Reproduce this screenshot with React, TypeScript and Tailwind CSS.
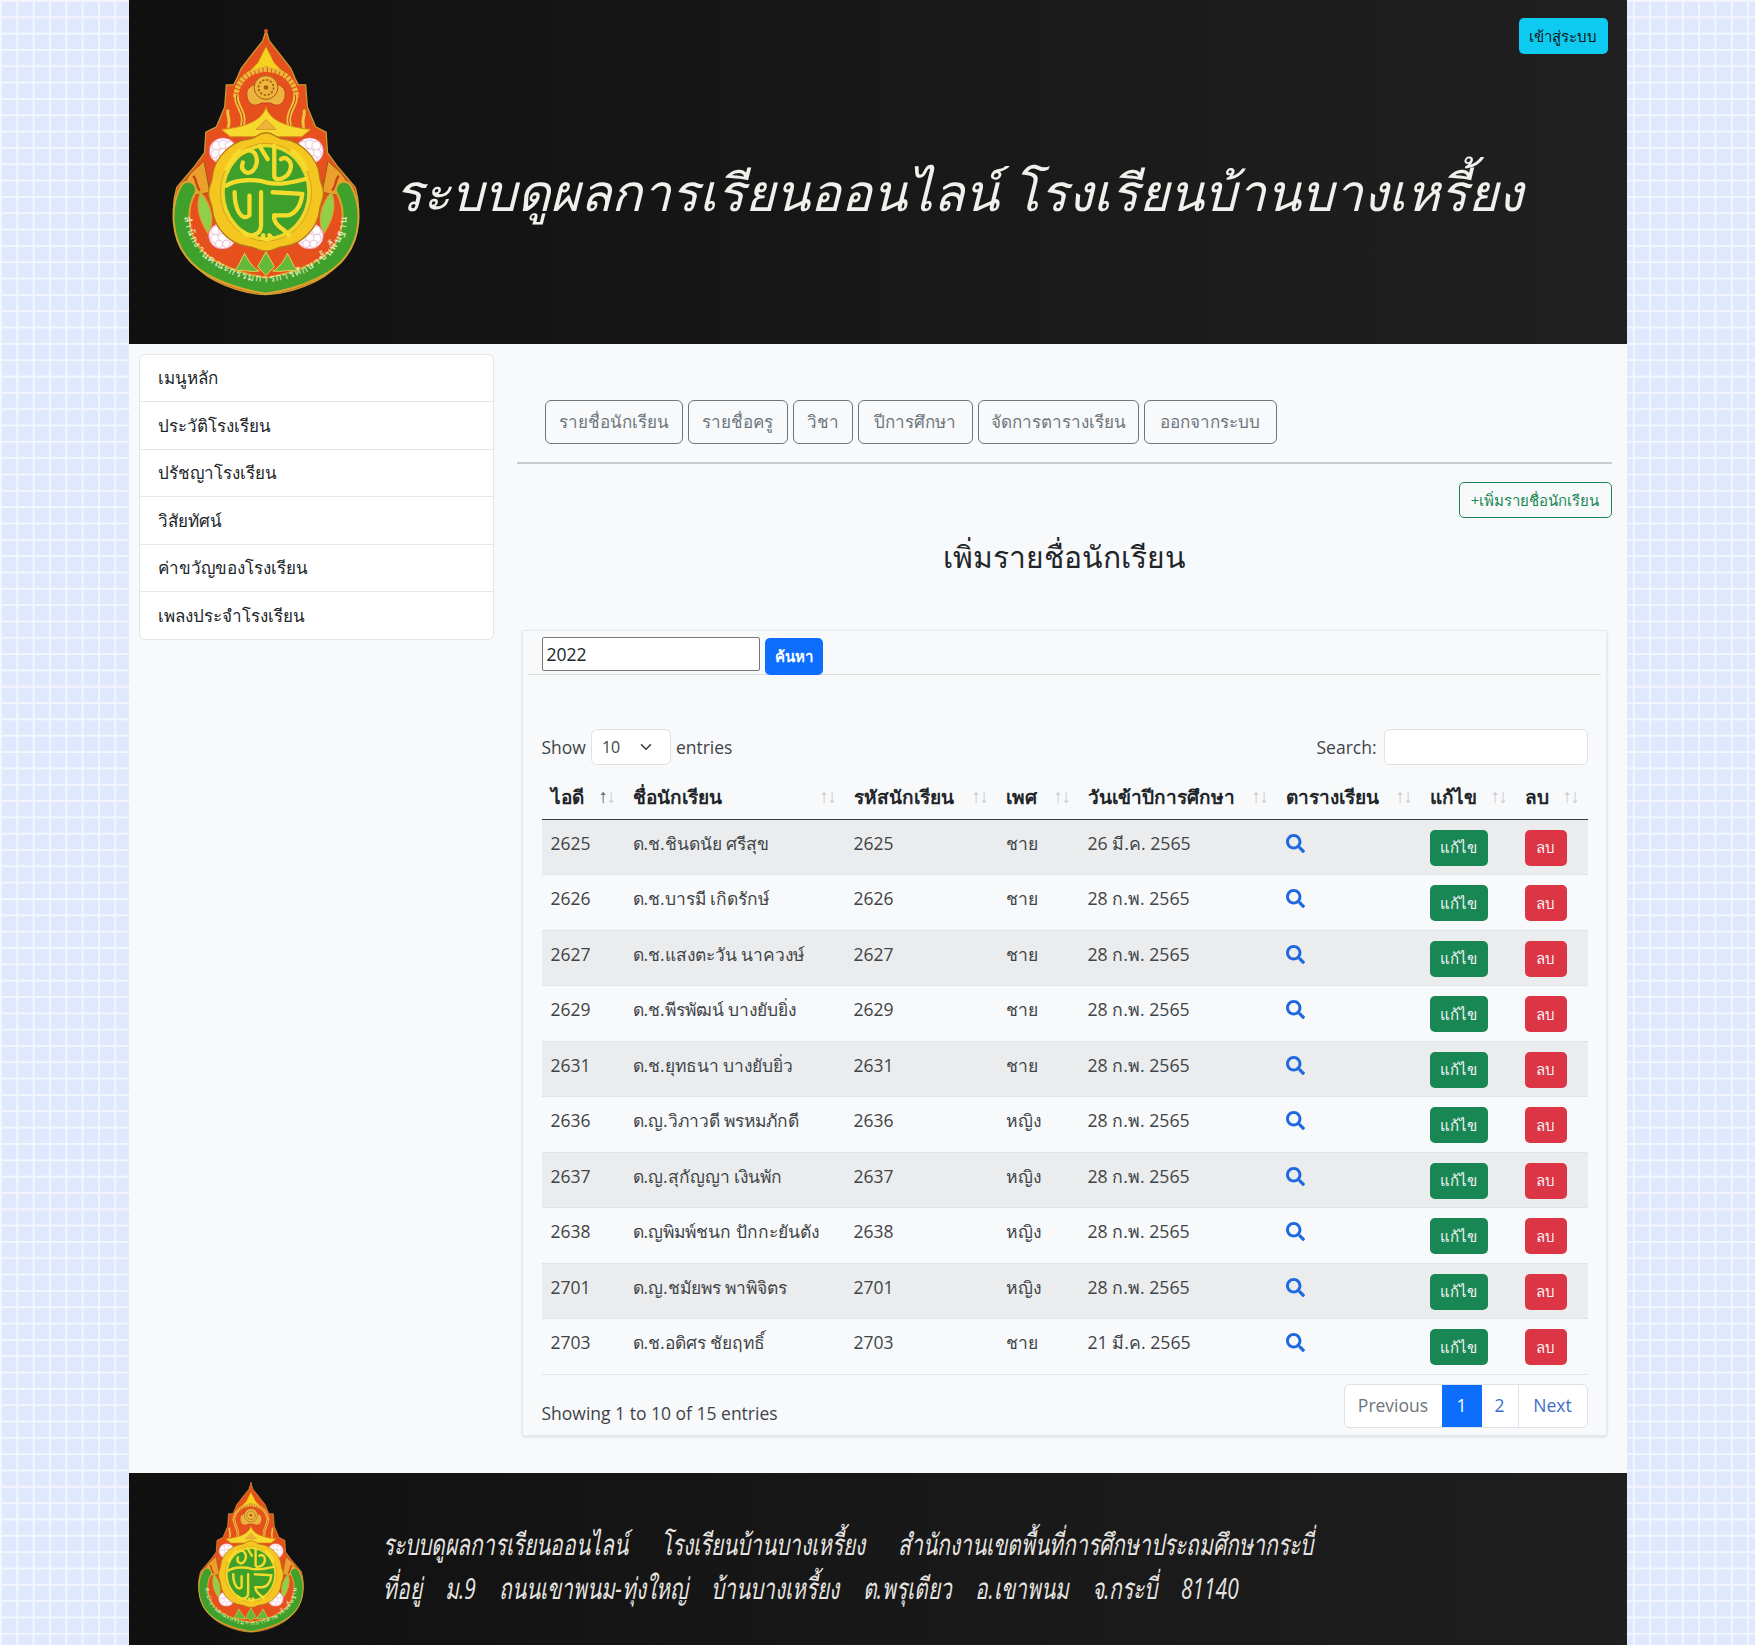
import { FaSearch } from "react-icons/fa";
import { ChevronDown } from "lucide-react";

const menuItems = ["เมนูหลัก", "ประวัติโรงเรียน", "ปรัชญาโรงเรียน", "วิสัยทัศน์", "ค่าขวัญของโรงเรียน", "เพลงประจำโรงเรียน"];

const navButtons = [
  { label: "รายชื่อนักเรียน", width: "w-[138px]" },
  { label: "รายชื่อครู", width: "w-[100px]" },
  { label: "วิชา", width: "w-[60px]" },
  { label: "ปีการศึกษา", width: "w-[115px]" },
  { label: "จัดการตารางเรียน", width: "w-[161px]" },
  { label: "ออกจากระบบ", width: "w-[133px]" },
];

const columns = [
  { label: "ไอดี", width: "w-[82px]" },
  { label: "ชื่อนักเรียน", width: "w-[221px]" },
  { label: "รหัสนักเรียน", width: "w-[152px]" },
  { label: "เพศ", width: "w-[82px]" },
  { label: "วันเข้าปีการศึกษา", width: "w-[198px]" },
  { label: "ตารางเรียน", width: "w-[144px]" },
  { label: "แก้ไข", width: "w-[95px]" },
  { label: "ลบ", width: "w-[72px]" },
];

const students = [
  { id: 2625, name: "ด.ช.ชินดนัย ศรีสุข", sex: "ชาย", date: "26 มี.ค. 2565" },
  { id: 2626, name: "ด.ช.บารมี เกิดรักษ์", sex: "ชาย", date: "28 ก.พ. 2565" },
  { id: 2627, name: "ด.ช.แสงตะวัน นาควงษ์", sex: "ชาย", date: "28 ก.พ. 2565" },
  { id: 2629, name: "ด.ช.พีรพัฒน์ บางยับยิ่ง", sex: "ชาย", date: "28 ก.พ. 2565" },
  { id: 2631, name: "ด.ช.ยุทธนา บางยับยิ่ว", sex: "ชาย", date: "28 ก.พ. 2565" },
  { id: 2636, name: "ด.ญ.วิภาวดี พรหมภักดี", sex: "หญิง", date: "28 ก.พ. 2565" },
  { id: 2637, name: "ด.ญ.สุกัญญา เงินพัก", sex: "หญิง", date: "28 ก.พ. 2565" },
  { id: 2638, name: "ด.ญพิมพ์ชนก ปักกะยันตัง", sex: "หญิง", date: "28 ก.พ. 2565" },
  { id: 2701, name: "ด.ญ.ชมัยพร พาพิจิตร", sex: "หญิง", date: "28 ก.พ. 2565" },
  { id: 2703, name: "ด.ช.อดิศร ชัยฤทธิ์", sex: "ชาย", date: "21 มี.ค. 2565" },
];

function Lotus({ x, y }: { x: number; y: number }) {
  return (
    <g transform={`translate(${x} ${y})`}>
      <ellipse cx="0" cy="0" rx="42" ry="40" fill="#fbf3f6" stroke="#e7577c" strokeWidth="2" />
      <circle cx="-20" cy="-16" r="13" fill="#fff" stroke="#e3a9bd" strokeWidth="2" />
      <circle cx="0" cy="-20" r="13" fill="#fff" stroke="#e3a9bd" strokeWidth="2" />
      <circle cx="20" cy="-16" r="13" fill="#fff" stroke="#e3a9bd" strokeWidth="2" />
      <circle cx="-22" cy="8" r="13" fill="#fff" stroke="#e3a9bd" strokeWidth="2" />
      <circle cx="22" cy="8" r="13" fill="#fff" stroke="#e3a9bd" strokeWidth="2" />
      <circle cx="0" cy="6" r="13" fill="#fff" stroke="#e3a9bd" strokeWidth="2" />
      <circle cx="-10" cy="24" r="11" fill="#fff" stroke="#e3a9bd" strokeWidth="2" />
      <circle cx="12" cy="24" r="11" fill="#fff" stroke="#e3a9bd" strokeWidth="2" />
    </g>
  );
}

// emblem of the education commission, traced by eye from the banner
function Emblem({ className }: { className: string }) {
  const band = "M84 512 C52 570 60 650 98 700 C130 745 210 785 320 803 C430 785 510 745 542 700 C580 650 588 570 556 512";
  return (
    <svg viewBox="36 26 574 808" className={className}>
      <path
        d="M320 30 L330 62 L360 100 L395 145 L410 180 L418 195 L440 195 L445 262 L470 322 L502 338 L506 400 L535 440 L590 505 C610 570 600 640 565 700 C540 745 510 770 470 790 C420 815 370 828 320 830 C270 828 220 815 170 790 C130 770 100 745 75 700 C40 640 30 570 50 505 L105 440 L134 400 L138 338 L170 322 L195 262 L200 195 L222 195 L230 180 L245 145 L280 100 L310 62 Z"
        fill="#e6501c"
        stroke="#c99a2e"
        strokeWidth="4"
      />
      {/* crown */}
      <path d="M320 78 L345 128 L378 162 L350 150 L320 140 L290 150 L262 162 L295 128 Z" fill="#f6d21f" stroke="#b7761a" strokeWidth="2" />
      <path d="M228 232 C232 180 270 150 320 148 C370 150 408 180 412 232" fill="none" stroke="#e9b93a" strokeWidth="16" strokeDasharray="10 3" />
      <path d="M262 225 C255 175 385 175 378 225 C376 258 350 262 335 250 L305 250 C290 262 264 258 262 225 Z" fill="#edb43d" stroke="#c9401a" strokeWidth="3" />
      <circle cx="320" cy="203" r="36" fill="#efb43a" stroke="#a45b15" strokeWidth="3" />
      <circle cx="320" cy="203" r="23" fill="none" stroke="#a45b15" strokeWidth="5" strokeDasharray="7 5" />
      <circle cx="320" cy="203" r="7" fill="#a45b15" />
      <g fill="none">
        <path d="M232 225 C222 255 262 275 248 320 M408 225 C418 255 378 275 392 320" stroke="#f2c33d" strokeWidth="14" />
        <path d="M232 225 C222 255 262 275 248 320 M408 225 C418 255 378 275 392 320" stroke="#b83a16" strokeWidth="3" />
        <path d="M205 270 C200 290 215 300 205 325 M435 270 C440 290 425 300 435 325" stroke="#f2c33d" strokeWidth="9" />
      </g>
      <path d="M320 262 C310 300 265 322 185 330 L212 352 L428 352 L455 330 C375 322 330 300 320 262 Z" fill="#f7d82c" stroke="#d4911d" strokeWidth="3" />
      <path d="M290 330 L320 300 L350 330 Z" fill="#efb43a" stroke="#c9801a" strokeWidth="2" />
      {/* side scrolls */}
      <g fill="#eaa02a" stroke="#9c5a14" strokeWidth="3">
        <path d="M78 485 C92 455 122 440 132 425 L150 520 L100 530 C85 525 72 510 78 485 Z" />
        <path d="M562 485 C548 455 518 440 508 425 L490 520 L540 530 C555 525 568 510 562 485 Z" />
      </g>
      <path d="M100 470 C115 490 105 500 120 515 M540 470 C525 490 535 500 520 515" fill="none" stroke="#c9401a" strokeWidth="7" />
      {/* green band */}
      <path d={band} fill="none" stroke="#d9a52f" strokeWidth="54" strokeLinecap="round" />
      <path d={band} fill="none" stroke="#3fa12b" strokeWidth="42" strokeLinecap="round" />
      <path id="emblem-band-text" d="M72 590 C82 660 110 705 158 738 C215 776 270 790 320 792 C370 790 425 776 482 738 C530 705 558 660 568 590" fill="none" />
      <text fontSize="30" fill="#f7f5d5" fontWeight="500">
        <textPath href="#emblem-band-text" startOffset="50%" textAnchor="middle" textLength="690" lengthAdjust="spacing">
          สำนักงานคณะกรรมการการศึกษาขั้นพื้นฐาน
        </textPath>
      </text>
      {/* leaf ornaments */}
      <path d="M122 520 C104 565 122 610 145 645 C165 610 156 560 122 520 Z M518 520 C536 565 518 610 495 645 C475 610 484 560 518 520 Z" fill="#8fcf4a" stroke="#d9a52f" strokeWidth="4" />
      <path d="M320 700 L345 745 L320 772 L295 745 Z M255 705 C270 735 285 752 300 758 C270 764 245 750 222 760 C238 745 245 722 255 705 Z M385 705 C370 735 355 752 340 758 C370 764 395 750 418 760 C402 745 395 722 385 705 Z" fill="#63b93a" stroke="#e9d44f" strokeWidth="3" />
      <Lotus x={190} y={395} />
      <Lotus x={452} y={395} />
      <Lotus x={188} y={652} />
      <Lotus x={452} y={652} />
      {/* medallion */}
      <path d="M320 340 C345 340 350 358 375 360 C428 366 478 420 482 470 C484 495 494 500 494 522 C494 545 484 552 482 575 C476 630 428 678 375 684 C350 686 345 698 320 698 C295 698 290 686 265 684 C212 678 164 630 158 575 C156 552 146 545 146 522 C146 500 156 495 158 470 C162 420 212 366 265 360 C290 358 295 340 320 340 Z" fill="#f4c61f" stroke="#b7761a" strokeWidth="4" />
      <ellipse cx="320" cy="520" rx="138" ry="148" fill="#f0d52a" stroke="#c28a1c" strokeWidth="2" />
      <ellipse cx="320" cy="520" rx="125" ry="136" fill="#3e9f2a" />
      <g fill="none" strokeLinecap="round" strokeLinejoin="round" stroke="#f5dc2c" strokeWidth="13">
        <path d="M250 400 C290 375 305 430 280 455 C265 470 240 455 250 430" />
        <path d="M345 380 L345 470 C345 490 390 480 395 445 C398 425 380 410 365 420" />
        <path d="M200 500 C230 480 290 480 320 490 C360 500 400 490 440 480" />
        <path d="M225 520 C225 570 245 610 270 590 L270 530" />
        <path d="M305 520 L305 620 C305 650 270 660 250 640" />
        <path d="M340 520 L430 525 C425 565 405 590 380 590 L345 590" />
        <path d="M345 590 C340 620 375 630 390 650" />
        <path d="M200 450 C215 420 225 410 240 395 M440 450 C430 420 415 405 400 395" />
        <path d="M300 380 L325 420 M330 650 C350 665 300 668 312 650" />
      </g>
      <circle cx="320" cy="32" r="6" fill="#e6501c" />
    </svg>
  );
}

function SortArrows({ active }: { active?: boolean }) {
  return (
    <span className="shrink-0 text-[19px] leading-none font-normal tracking-[-1.5px] text-[#c9cbcd]">
      <span className={active ? "text-[#555a5f]" : ""}>↑</span>↓
    </span>
  );
}

export default function App() {
  return (
    <div className="min-h-screen bg-[#dfe8fc] bg-[linear-gradient(#f3f6fe_1.5px,transparent_1.5px),linear-gradient(90deg,#f3f6fe_1.5px,transparent_1.5px)] bg-[size:16.33px_16.33px] font-['Open_Sans','Noto_Sans',sans-serif] text-[17.5px] text-[#212529]">
      <div className="mx-auto w-[1498px] bg-[#f8f9fa]">
        {/* Banner */}
        <header className="relative flex h-[344px] items-start bg-[linear-gradient(90deg,#101010,#212020)]">
          <Emblem className="mt-[29px] ml-[43px] h-[267px] w-[190px] shrink-0" />
          <div className="mt-[155px] ml-[33px] text-[51.4px] leading-[72px] whitespace-nowrap text-[#f2f0ec] italic">
            ระบบดูผลการเรียนออนไลน์ โรงเรียนบ้านบางเหรี้ยง
          </div>
          <button className="absolute top-[18px] right-[19px] h-[36px] w-[89px] rounded-[5px] bg-[#0dcaf0] text-[15px] font-medium text-[#111]">
            เข้าสู่ระบบ
          </button>
        </header>

        <div className="flex">
          {/* Sidebar */}
          <aside className="mt-[10px] ml-[10px] h-[286px] w-[355px] shrink-0 overflow-hidden rounded-[6px] border border-[#e4e5e6] bg-white text-[17px]">
            {menuItems.map((item) => (
              <div key={item} className="flex h-[47.4px] items-center border-b border-[#e6e7e8] px-[18px] last:border-b-0">
                {item}
              </div>
            ))}
          </aside>

          <main className="ml-[23px] w-[1095px]">
            {/* Nav */}
            <nav className="mt-[56px] flex gap-[5px] pl-[28px]">
              {navButtons.map((btn) => (
                <button key={btn.label} className={`h-[44px] rounded-[6px] border border-[#6c757d] text-[17px] text-[#6c757d] ${btn.width}`}>
                  {btn.label}
                </button>
              ))}
            </nav>
            <hr className="mt-[18px] border-t-2 border-[#c9cacb]" />

            <div className="mt-[18px] flex justify-end">
              <button className="h-[36px] w-[153px] rounded-[5px] border border-[#198754] text-[15px] text-[#198754]">
                +เพิ่มรายชื่อนักเรียน
              </button>
            </div>

            <h3 className="mt-[19px] h-[93px] text-center text-[30px] leading-[40px] font-medium">เพิ่มรายชื่อนักเรียน</h3>

            {/* Card */}
            <section className="mb-[37px] ml-[5px] h-[806px] w-[1085px] rounded-[2px] border border-[#e7e8e9] shadow-[0_1px_3px_rgba(0,0,0,0.12)]">
              <div className="mx-[5px] flex h-[44px] items-start gap-[5px] border-b-[1.5px] border-[#dcdddd] pt-[6px] pl-[14px]">
                <input
                  readOnly
                  value="2022"
                  className="h-[34px] w-[218px] rounded-[2px] border border-[#767676] bg-white px-[4px] text-[17.5px] text-[#212529]"
                />
                <button className="mt-[1px] h-[37px] w-[58px] rounded-[5px] bg-[#0d6efd] text-[15px] font-semibold text-white">ค้นหา</button>
              </div>

              <div className="mr-[18px] ml-[19px]">
                <div className="mt-[54px] flex h-[36px] items-center justify-between">
                  <div className="flex items-center gap-[5px] text-[#3f4448]">
                    <span>Show</span>
                    <div className="flex h-[36px] w-[80px] items-center justify-between rounded-[6px] border border-[#dee2e6] bg-white pr-[15px] pl-[10px] text-[16px]">
                      10
                      <ChevronDown size={18} strokeWidth={2} className="text-[#343a40]" />
                    </div>
                    <span>entries</span>
                  </div>
                  <div className="flex items-center gap-[7px] text-[#3f4448]">
                    <span>Search:</span>
                    <div className="h-[36px] w-[204px] rounded-[6px] border border-[#dee2e6] bg-white" />
                  </div>
                </div>

                {/* Table */}
                <table className="mt-[10px] w-[1046px] table-fixed border-collapse">
                  <thead>
                    <tr className="h-[44px] border-b-[1.5px] border-[#3a3d40] text-[19px]">
                      {columns.map((col, i) => (
                        <th key={col.label} className={`px-[9px] text-left ${col.width}`}>
                          <div className="flex items-center justify-between whitespace-nowrap">
                            {col.label}
                            <SortArrows active={i === 0} />
                          </div>
                        </th>
                      ))}
                    </tr>
                  </thead>
                  <tbody className="text-[#3f4448]">
                    {students.map((s, i) => (
                      <tr key={s.id} className={`h-[55.5px] border-b border-[#e2e3e5] align-top ${i % 2 === 0 ? "bg-[#ebeced]" : ""}`}>
                        <td className="px-[9px] pt-[10px]">{s.id}</td>
                        <td className="px-[9px] pt-[10px] text-[17.4px] whitespace-nowrap">{s.name}</td>
                        <td className="px-[9px] pt-[10px]">{s.id}</td>
                        <td className="px-[9px] pt-[10px]">{s.sex}</td>
                        <td className="px-[9px] pt-[10px] text-[17.7px]">{s.date}</td>
                        <td className="px-[9px] pt-[14px]">
                          <FaSearch className="h-[19px] w-[19px] text-[#1f69e0]" />
                        </td>
                        <td className="px-[9px] pt-[10px]">
                          <button className="h-[36px] w-[58px] rounded-[5px] bg-[#198754] text-[15px] font-medium text-[#f4f4f4]">แก้ไข</button>
                        </td>
                        <td className="px-[9px] pt-[10px]">
                          <button className="h-[36px] w-[42px] rounded-[5px] bg-[#dc3545] text-[15px] font-medium text-[#f4f4f4]">ลบ</button>
                        </td>
                      </tr>
                    ))}
                  </tbody>
                </table>

                {/* Table footer */}
                <div className="mt-[9px] flex items-start justify-between">
                  <span className="mt-[16px] text-[#3f4448]">Showing 1 to 10 of 15 entries</span>
                  <div className="flex h-[44px] overflow-hidden rounded-[6px] border border-[#dee2e6] bg-white">
                    <span className="flex w-[97px] items-center justify-center text-[#6c757d]">Previous</span>
                    <span className="flex w-[40px] items-center justify-center bg-[#0d6efd] text-white">1</span>
                    <span className="flex w-[37px] items-center justify-center border-r border-[#dee2e6] text-[#3b6fc9]">2</span>
                    <span className="flex w-[68px] items-center justify-center text-[#3b6fc9]">Next</span>
                  </div>
                </div>
              </div>
            </section>
          </main>
        </div>

        {/* Footer */}
        <footer className="flex h-[172px] items-start overflow-hidden bg-[linear-gradient(90deg,#101010,#1f1f1f)]">
          <Emblem className="mt-[9px] ml-[69px] h-[151px] w-[107px] shrink-0" />
          <div className="mt-[48px] ml-[78px] origin-top-left scale-y-[1.4] text-[21px] leading-[32px] whitespace-nowrap text-[#e6e4e0] italic">
            <div className="[word-spacing:28px]">ระบบดูผลการเรียนออนไลน์ โรงเรียนบ้านบางเหรี้ยง สำนักงานเขตพื้นที่การศึกษาประถมศึกษากระบี่</div>
            <div className="[word-spacing:18px]">ที่อยู่ ม.9 ถนนเขาพนม-ทุ่งใหญ่ บ้านบางเหรี้ยง ต.พรุเตียว อ.เขาพนม จ.กระบี่ 81140</div>
          </div>
        </footer>
      </div>
    </div>
  );
}
